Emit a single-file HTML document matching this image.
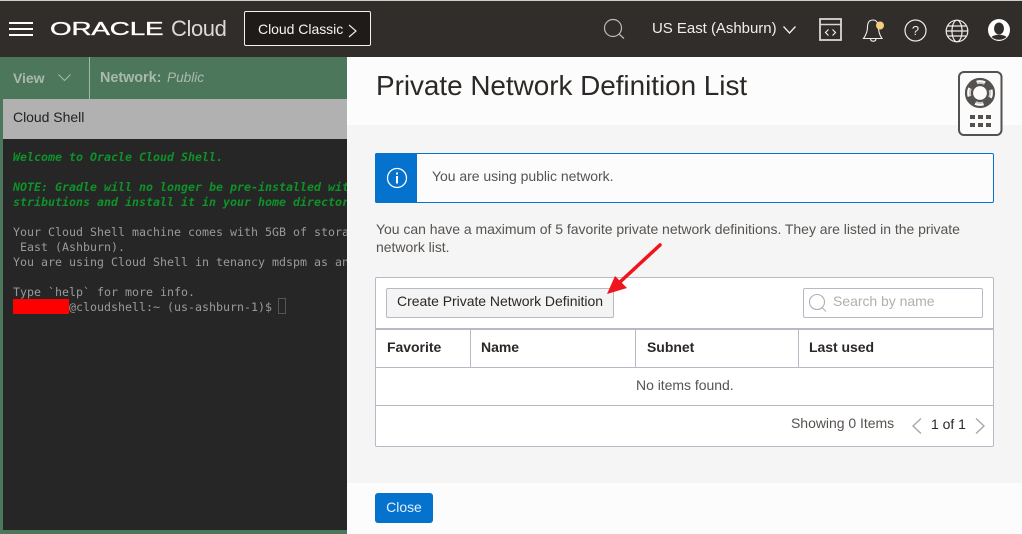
<!DOCTYPE html>
<html><head><meta charset="utf-8">
<style>
html,body{margin:0;padding:0}
body{width:1022px;height:534px;position:relative;overflow:hidden;background:#4d775b;font-family:"Liberation Sans",sans-serif;letter-spacing:-.03px}
.a{position:absolute;white-space:nowrap}
.t{position:absolute;white-space:pre;font-family:"DejaVu Sans Mono",monospace;font-size:11.63px;line-height:15px;left:13px;color:#9a9a9a;letter-spacing:0}
.g{color:#0d9328;font-weight:bold;font-style:italic}
svg{position:absolute;overflow:visible}
</style></head><body>
<div class="a" style="left:0;top:0;width:1022px;height:1px;background:#cfcdc4"></div>
<div class="a" style="left:0;top:1px;width:1022px;height:56px;background:#312d2a"></div>
<div class="a" style="left:9px;top:22px;width:24px;height:2px;background:#fff"></div>
<div class="a" style="left:9px;top:28px;width:24px;height:2px;background:#fff"></div>
<div class="a" style="left:9px;top:34px;width:24px;height:2px;background:#fff"></div>
<div class="a" style="left:50px;top:19px;font-size:18px;line-height:21px;color:#fff;transform:scaleX(1.545);transform-origin:0 0;letter-spacing:-.1px;-webkit-text-stroke:.35px #fff">ORACLE</div>
<div class="a" style="left:171px;top:16px;font-size:22px;line-height:26px;color:#dcdad7;letter-spacing:-.4px">Cloud</div>
<div class="a" style="left:244px;top:11px;width:125px;height:33px;border:1px solid #f2f2f2;border-radius:2px;background:#1f1b18"></div>
<div class="a" style="left:258px;top:20px;font-size:14px;line-height:18px;color:#f4f4f4">Cloud Classic</div>
<svg style="left:348px;top:24px" width="10" height="14"><path d="M1 1l7 6-7 6" fill="none" stroke="#e8e8e8" stroke-width="1.2"/></svg>
<svg style="left:603px;top:18px" width="22" height="22"><circle cx="10" cy="10" r="8.500" fill="none" stroke="#bdbbb8" stroke-width="1.200"/><path d="M16 16l5 4.500" stroke="#bdbbb8" stroke-width="1.200"/></svg>
<div class="a" style="left:652px;top:20px;font-size:15px;line-height:18px;color:#eeeeee">US East (Ashburn)</div>
<svg style="left:782px;top:25px" width="14" height="10"><path d="M1.500 1.500l6 6.500 6-6.500" fill="none" stroke="#eee" stroke-width="1.300"/></svg>
<svg style="left:819px;top:18px" width="23" height="23"><rect x="1" y="1" width="21" height="21" fill="none" stroke="#d8d8d6" stroke-width="1.800"/><path d="M1 6.500h21" stroke="#d8d8d6" stroke-width="1.500"/><path d="M9.500 11.500l-3 3 3 3M13.500 11.500l3 3-3 3" fill="none" stroke="#eee" stroke-width="1.200"/></svg>
<svg style="left:862px;top:18px" width="24" height="25"><path d="M11 2c-4 0-5.500 3-5.500 7 0 5-1.500 8-4 11.500h18.500c-2.500-3.500-3.500-6.500-3.500-11.500 0-3-1.500-7-5.500-7z" fill="none" stroke="#eee" stroke-width="1.100"/><path d="M8.500 21c.5 3 5 3 5.500 0" fill="none" stroke="#eee" stroke-width="1.100"/><circle cx="18" cy="7.500" r="4" fill="#f2cf7e"/></svg>
<svg style="left:904px;top:19px" width="23" height="23"><circle cx="11.500" cy="11.500" r="10.500" fill="none" stroke="#eee" stroke-width="1.200"/><text x="11.500" y="16" text-anchor="middle" font-size="13" fill="#eee" font-family="Liberation Sans">?</text></svg>
<svg style="left:945px;top:19px" width="24" height="24"><g fill="none" stroke="#eee" stroke-width="1.200"><circle cx="12" cy="12" r="10.800"/><ellipse cx="12" cy="12" rx="5" ry="10.800"/><path d="M1.500 12h21M3 7h18M3 17h18"/></g></svg>
<svg style="left:988px;top:19px" width="22" height="22"><circle cx="11" cy="11" r="11" fill="#fff"/><ellipse cx="11" cy="9.500" rx="5" ry="6" fill="#312d2a"/><path d="M3.500 18c3-3 12-3 15 0-2 1.800-4.500 2.800-7.500 2.800s-5.500-1-7.500-2.800z" fill="#312d2a"/></svg>

<div class="a" style="left:0;top:57px;width:347px;height:42px;background:#4d775b"></div>
<div class="a" style="left:13px;top:69px;font-size:14px;line-height:18px;font-weight:bold;color:#a9b9ae">View</div>
<svg style="left:58px;top:74px" width="14" height="8"><path d="M.5 .5l6 6 6-6" fill="none" stroke="#a9b9ae" stroke-width="1"/></svg>
<div class="a" style="left:89px;top:57px;width:1px;height:42px;background:#a3b5a9"></div>
<div class="a" style="left:100px;top:69px;font-size:14.400px;line-height:18px;font-weight:bold;color:#a9b9ae">Network:</div>
<div class="a" style="left:167px;top:69px;font-size:13.700px;line-height:18px;font-style:italic;color:#a9b9ae">Public</div>
<div class="a" style="left:3px;top:99px;width:344px;height:40px;background:#b1b1b1"></div>
<div class="a" style="left:13px;top:108px;font-size:14px;line-height:18px;color:#222">Cloud Shell</div>
<div class="a" style="left:3px;top:139px;width:344px;height:391px;background:#262626;overflow:hidden"></div>
<div class="a" style="left:0;top:139px;width:347px;height:391px;overflow:hidden">
<div class="t g" style="top:11px">Welcome to Oracle Cloud Shell.</div>
<div class="t g" style="top:41px">NOTE: Gradle will no longer be pre-installed wit</div>
<div class="t g" style="top:56px">stributions and install it in your home director</div>
<div class="t" style="top:86px">Your Cloud Shell machine comes with 5GB of stora</div>
<div class="t" style="top:101px"> East (Ashburn).</div>
<div class="t" style="top:116px">You are using Cloud Shell in tenancy mdspm as an</div>
<div class="t" style="top:146px">Type `help` for more info.</div>
<div class="t" style="top:161px">        @cloudshell:~ (us-ashburn-1)$</div>
<div class="a" style="left:13px;top:160px;width:56px;height:15px;background:#ff0000"></div>
<div class="a" style="left:278px;top:159px;width:6px;height:14px;border:1px solid #555"></div>
</div>

<div class="a" style="left:347px;top:57px;width:675px;height:477px;background:#fcfcfc"></div>
<div class="a" style="left:347px;top:125px;width:675px;height:358px;background:#f5f5f5"></div>
<div class="a" style="left:376px;top:69px;font-size:27.900px;line-height:34px;color:#2b2826">Private Network Definition List</div>

<svg style="left:958px;top:71px" width="45" height="65"><rect x="1" y="1" width="42.500" height="63" rx="5" fill="#fbfbfb" stroke="#55514e" stroke-width="2"/><circle cx="22" cy="22" r="11" fill="#c9c8c6"/><circle cx="22" cy="22" r="14" fill="none" stroke="#55514e" stroke-width="2.200"/><circle cx="22" cy="22" r="8" fill="#fbfbfb" stroke="#55514e" stroke-width="2.200"/><circle cx="22" cy="22" r="11" fill="none" stroke="#55514e" stroke-width="5" stroke-dasharray="9 8.280" transform="rotate(24.500 22 22)"/><g fill="#55514e"><rect x="12" y="44" width="5" height="4"/><rect x="20" y="44" width="5" height="4"/><rect x="28" y="44" width="5" height="4"/><rect x="12" y="52" width="5" height="4"/><rect x="20" y="52" width="5" height="4"/><rect x="28" y="52" width="5" height="4"/></g></svg>

<div class="a" style="left:375px;top:153px;width:617px;height:48px;border:1px solid #0572ce;border-radius:2px;background:#fcfcfc"></div>
<div class="a" style="left:375px;top:153px;width:42px;height:50px;background:#0572ce;border-radius:2px 0 0 2px"></div>
<svg style="left:386px;top:167px" width="22" height="22"><circle cx="11" cy="11" r="9.500" fill="none" stroke="#fff" stroke-width="1.300"/><rect x="10" y="9" width="2" height="7.500" fill="#fff"/><rect x="10" y="5.500" width="2" height="2" fill="#fff"/></svg>
<div class="a" style="left:432px;top:167px;font-size:14px;line-height:18px;color:#57534f">You are using public network.</div>
<div class="a" style="left:376px;top:220px;font-size:14px;line-height:18px;color:#57534f">You can have a maximum of 5 favorite private network definitions. They are listed in the private</div>
<div class="a" style="left:376px;top:238px;font-size:14px;line-height:18px;color:#57534f">network list.</div>

<div class="a" style="left:375px;top:277px;width:617px;height:168px;border:1px solid #b5bac4;border-radius:2px;background:#fff"></div>
<div class="a" style="left:386px;top:288px;width:226px;height:28px;border:1px solid #b5bac4;border-radius:2px;background:#f4f4f4"></div>
<div class="a" style="left:397px;top:292px;font-size:14px;line-height:18px;color:#2b2826">Create Private Network Definition</div>
<div class="a" style="left:803px;top:288px;width:178px;height:28px;border:1px solid #b5bac4;border-radius:2px;background:#fff"></div>
<svg style="left:808px;top:293px" width="20" height="20"><circle cx="9" cy="9" r="7.500" fill="none" stroke="#b0b0b0" stroke-width="1.100"/><path d="M14 14.500l4 4" stroke="#b0b0b0" stroke-width="1.100"/></svg>
<div class="a" style="left:833px;top:292px;font-size:14px;line-height:18px;color:#b0b0b0">Search by name</div>

<div class="a" style="left:376px;top:328px;width:617px;height:2px;background:#b5bac4"></div>
<div class="a" style="left:376px;top:367px;width:617px;height:1px;background:#b5bac4"></div>
<div class="a" style="left:376px;top:405px;width:617px;height:1px;background:#b5bac4"></div>
<div class="a" style="left:470px;top:330px;width:1px;height:37px;background:#b5bac4"></div>
<div class="a" style="left:635px;top:330px;width:1px;height:37px;background:#b5bac4"></div>
<div class="a" style="left:798px;top:330px;width:1px;height:37px;background:#b5bac4"></div>
<div class="a" style="left:387px;top:338px;font-size:14px;line-height:18px;font-weight:bold;color:#2b2826">Favorite</div>
<div class="a" style="left:481px;top:338px;font-size:14px;line-height:18px;font-weight:bold;color:#2b2826">Name</div>
<div class="a" style="left:647px;top:338px;font-size:14px;line-height:18px;font-weight:bold;color:#2b2826">Subnet</div>
<div class="a" style="left:809px;top:338px;font-size:14px;line-height:18px;font-weight:bold;color:#2b2826">Last used</div>
<div class="a" style="left:636px;top:376px;font-size:14px;line-height:18px;color:#57534f">No items found.</div>
<div class="a" style="left:791px;top:414px;font-size:14px;line-height:18px;color:#57534f">Showing 0 Items</div>
<svg style="left:911px;top:417px" width="12" height="18"><path d="M10 1.500l-8 7.500 8 7.500" fill="none" stroke="#a8a8a8" stroke-width="1.400"/></svg>
<div class="a" style="left:931px;top:415px;font-size:14px;line-height:18px;color:#2b2826">1 of 1</div>
<svg style="left:974px;top:417px" width="12" height="18"><path d="M2 1.500l8 7.500-8 7.500" fill="none" stroke="#a8a8a8" stroke-width="1.400"/></svg>

<svg style="left:600px;top:240px" width="65" height="60"><path d="M60 5L20 42" stroke="#f0141c" stroke-width="3.500" stroke-linecap="round"/><path d="M7 54L15 36 27 48z" fill="#f0141c"/></svg>

<div class="a" style="left:375px;top:493px;width:58px;height:30px;border-radius:3px;background:#0572ce"></div>
<div class="a" style="left:375px;top:498px;width:58px;text-align:center;font-size:14px;line-height:18px;color:#e3effa">Close</div>
</body></html>
